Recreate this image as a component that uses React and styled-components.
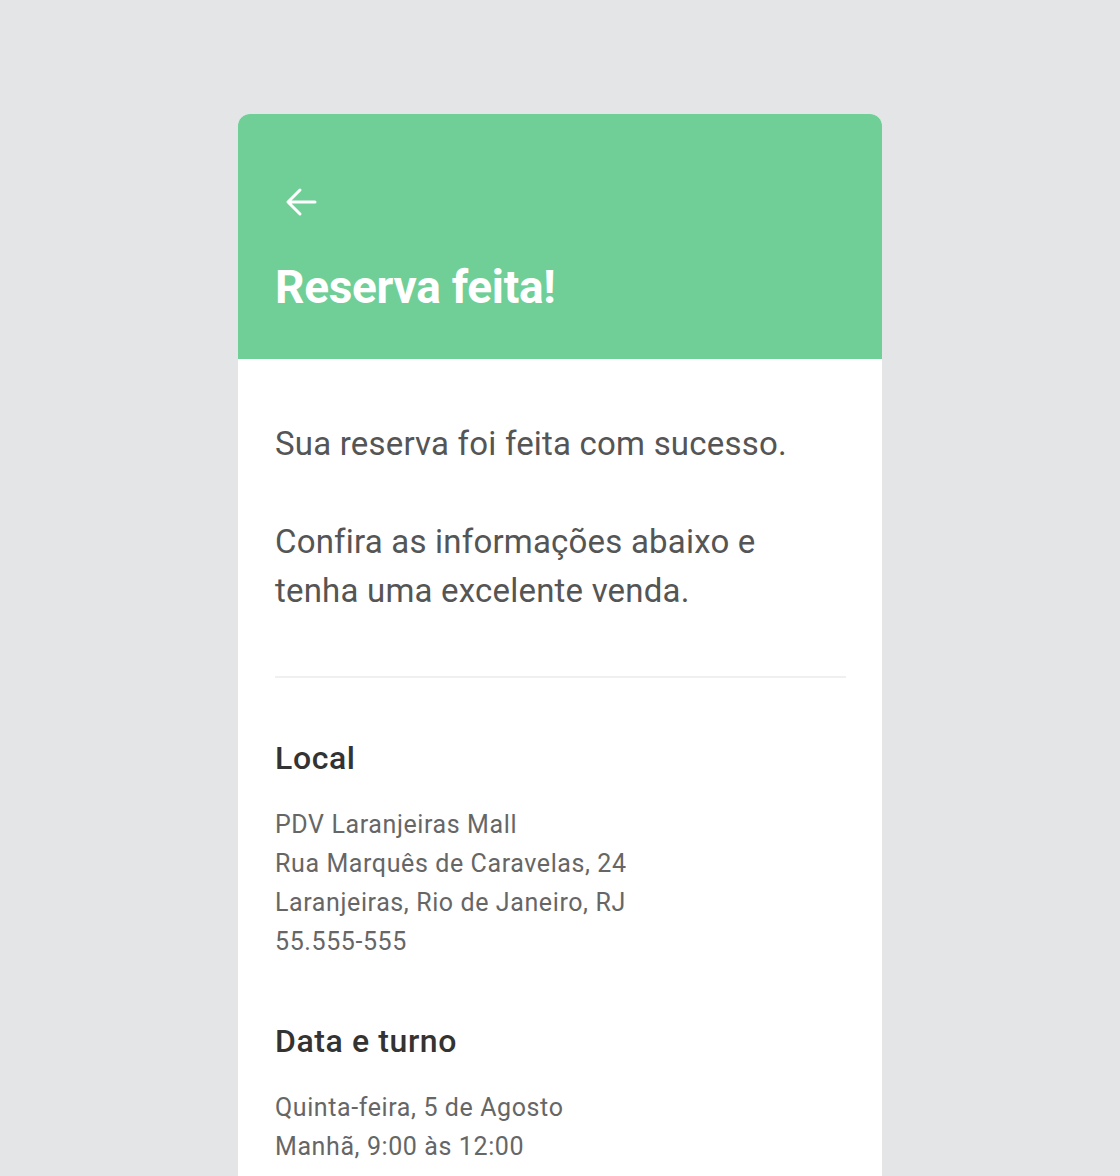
import styled, { createGlobalStyle } from "styled-components";

const GlobalStyle = createGlobalStyle`
  body {
    margin: 0;
    background: #e4e5e7;
    font-family: Roboto, "Liberation Sans", sans-serif;
  }
`;

const Page = styled.div`
  display: flex;
  justify-content: center;
  padding-top: 114px;
  min-height: 1176px;
  box-sizing: border-box;
`;

const Card = styled.div`
  width: 644px;
  background: #fff;
  border-radius: 12px 12px 0 0;
  overflow: hidden;
  min-height: 1062px;
`;

const Header = styled.header`
  background: #6fcf97;
  height: 245px;
  box-sizing: border-box;
  padding: 72px 36px 0 37px;
  display: flex;
  flex-direction: column;
`;

const BackButton = styled.button`
  border: 0;
  background: none;
  padding: 0;
  width: 34px;
  height: 32px;
  margin-left: 10px;
  color: #fff;
  cursor: pointer;
  display: flex;
  align-items: center;
`;

const Title = styled.h1`
  margin: 44px 0 0;
  color: #fff;
  font-size: 46px;
  font-weight: 700;
  line-height: 50px;
  letter-spacing: -0.3px;
`;

const Body = styled.div`
  padding: 60px 36px 0 37px;
`;

const Lead = styled.p`
  margin: 0 0 ${(p) => p.gap || 0}px;
  font-size: 33px;
  line-height: 49px;
  letter-spacing: 0.2px;
  color: #555;
`;

const Divider = styled.hr`
  border: 0;
  border-top: 2px solid #f0f0f0;
  margin: 61px 0 0;
`;

const Section = styled.section`
  margin-top: 56px;
`;

const SectionTitle = styled.h2`
  margin: 0 0 23px;
  font-size: 32px;
  font-weight: 500;
  line-height: 48px;
  letter-spacing: 0.6px;
  color: #333;
`;

const Info = styled.p`
  margin: 0;
  font-size: 25px;
  line-height: 39px;
  letter-spacing: 0.6px;
  color: #666;
`;

const ArrowLeft = () => (
  <svg width="32" height="30" viewBox="0 0 32 30" fill="none">
    <path
      d="M30 15H3M15 3L3 15l12 12"
      stroke="currentColor"
      strokeWidth="3"
      strokeLinecap="round"
      strokeLinejoin="round"
    />
  </svg>
);

export default function App() {
  return (
    <>
      <GlobalStyle />
      <Page>
        <Card>
          <Header>
            <BackButton aria-label="Voltar">
              <ArrowLeft />
            </BackButton>
            <Title>Reserva feita!</Title>
          </Header>
          <Body>
            <Lead gap={49}>Sua reserva foi feita com sucesso.</Lead>
            <Lead>
              Confira as informações abaixo e
              <br />
              tenha uma excelente venda.
            </Lead>
            <Divider />
            <Section>
              <SectionTitle>Local</SectionTitle>
              <Info>
                PDV Laranjeiras Mall
                <br />
                Rua Marquês de Caravelas, 24
                <br />
                Laranjeiras, Rio de Janeiro, RJ
                <br />
                55.555-555
              </Info>
            </Section>
            <Section>
              <SectionTitle>Data e turno</SectionTitle>
              <Info>
                Quinta-feira, 5 de Agosto
                <br />
                Manhã, 9:00 às 12:00
              </Info>
            </Section>
          </Body>
        </Card>
      </Page>
    </>
  );
}
